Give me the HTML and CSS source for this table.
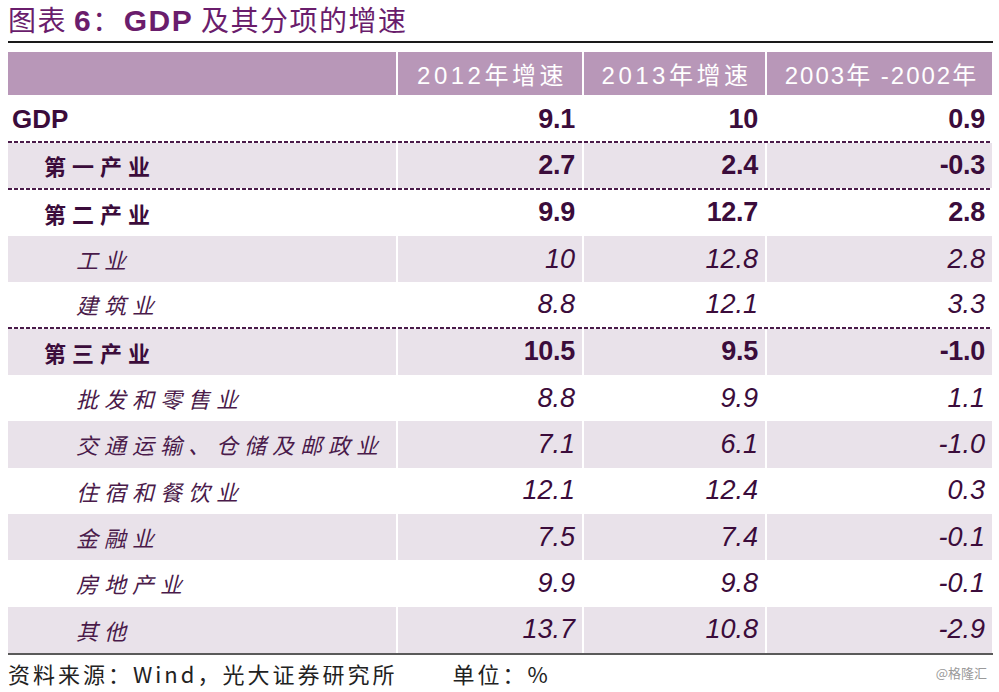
FILE: index.html
```html
<!DOCTYPE html>
<html lang="zh">
<head>
<meta charset="utf-8">
<title>图表6：GDP及其分项的增速</title>
<link rel="stylesheet" href="styles.css">
</head>
<body>
<div class="page">
  <h1 class="title">图表<span class="lat six">6</span>：<span class="lat">GDP</span> 及其分项的增速</h1>
  <div class="rule"></div>
  <div class="table">
    <div class="row head">
      <div class="cell"></div>
      <div class="cell hc">2012年增速</div>
      <div class="cell hc">2013年增速</div>
      <div class="cell hc">2003年 -2002年</div>
    </div>
    <div class="row white bold dash-b">
      <div class="cell lab gdp">GDP</div>
      <div class="cell num">9.1</div>
      <div class="cell num">10</div>
      <div class="cell num">0.9</div>
    </div>
    <div class="row shade bold dash-b">
      <div class="cell lab l1">第一产业</div>
      <div class="cell num">2.7</div>
      <div class="cell num">2.4</div>
      <div class="cell num">-0.3</div>
    </div>
    <div class="row white bold">
      <div class="cell lab l1">第二产业</div>
      <div class="cell num">9.9</div>
      <div class="cell num">12.7</div>
      <div class="cell num">2.8</div>
    </div>
    <div class="row shade it">
      <div class="cell lab l2">工业</div>
      <div class="cell num">10</div>
      <div class="cell num">12.8</div>
      <div class="cell num">2.8</div>
    </div>
    <div class="row white it dash-b">
      <div class="cell lab l2">建筑业</div>
      <div class="cell num">8.8</div>
      <div class="cell num">12.1</div>
      <div class="cell num">3.3</div>
    </div>
    <div class="row shade bold">
      <div class="cell lab l1">第三产业</div>
      <div class="cell num">10.5</div>
      <div class="cell num">9.5</div>
      <div class="cell num">-1.0</div>
    </div>
    <div class="row white it">
      <div class="cell lab l2">批发和零售业</div>
      <div class="cell num">8.8</div>
      <div class="cell num">9.9</div>
      <div class="cell num">1.1</div>
    </div>
    <div class="row shade it">
      <div class="cell lab l2">交通运输、仓储及邮政业</div>
      <div class="cell num">7.1</div>
      <div class="cell num">6.1</div>
      <div class="cell num">-1.0</div>
    </div>
    <div class="row white it">
      <div class="cell lab l2">住宿和餐饮业</div>
      <div class="cell num">12.1</div>
      <div class="cell num">12.4</div>
      <div class="cell num">0.3</div>
    </div>
    <div class="row shade it">
      <div class="cell lab l2">金融业</div>
      <div class="cell num">7.5</div>
      <div class="cell num">7.4</div>
      <div class="cell num">-0.1</div>
    </div>
    <div class="row white it">
      <div class="cell lab l2">房地产业</div>
      <div class="cell num">9.9</div>
      <div class="cell num">9.8</div>
      <div class="cell num">-0.1</div>
    </div>
    <div class="row shade it">
      <div class="cell lab l2">其他</div>
      <div class="cell num">13.7</div>
      <div class="cell num">10.8</div>
      <div class="cell num">-2.9</div>
    </div>
  </div>
  <div class="rule2"></div>
  <div class="foot">
    <span class="src">资料来源：Wind，光大证券研究所</span>
    <span class="unit">单位：%</span>
    <span class="wm">@格隆汇</span>
  </div>
</div>
</body>
</html>
```

FILE: styles.css
```css
html, body {
  margin: 0;
  padding: 0;
  background: #fff;
}
.page {
  width: 999px;
  height: 692px;
  box-sizing: border-box;
  padding: 0 6px 0 8px;
  font-family: "Liberation Sans", "Noto Sans CJK SC", sans-serif;
  overflow: hidden;
}
.title {
  margin: 0;
  height: 40px;
  line-height: 38px;
  font-size: 28px;
  font-weight: normal;
  color: #6a1d6c;
  letter-spacing: 1.5px;
  font-family: "Noto Sans CJK SC", sans-serif;
}
.title .lat {
  font-family: "Liberation Sans", sans-serif;
  font-weight: bold;
  font-size: 30px;
  margin-left: 2px;
}
.title .six {
  margin-left: 7px;
}
.rule {
  height: 2px;
  background: #1a1a1a;
  margin-top: 1px;
}
.table {
  margin-top: 9px;
  width: 984px;
  display: flex;
  flex-direction: column;
}
.row {
  display: grid;
  grid-template-columns: 388px 184px 181px 225px;
  column-gap: 2px;
  height: 46.33px;
  box-sizing: border-box;
}
.row.head {
  height: 45px;
  padding-bottom: 2px;
}
.cell {
  display: flex;
  align-items: center;
  box-sizing: border-box;
  color: #3b0c3b;
}
.head .cell {
  background: #b897b8;
}
.hc {
  justify-content: center;
  color: #fff;
  font-size: 24px;
  letter-spacing: 3.5px;
  padding-left: 4px;
  white-space: pre;
}
.head .hc:last-child {
  letter-spacing: 2px;
}
.shade .cell {
  background: #e9e2ea;
}
.white .cell {
  background: #fff;
}
.dash-b {
  padding-bottom: 2px;
  background: repeating-linear-gradient(90deg, #4a1b4a 0 4px, transparent 4px 6px) left bottom / 100% 2px no-repeat;
}
.num {
  justify-content: flex-end;
  padding-right: 7px;
  font-size: 27px;
  font-family: "Liberation Sans", sans-serif;
}
.bold .num {
  font-weight: bold;
  letter-spacing: -0.3px;
}
.it .num {
  font-style: italic;
}
.lab {
  font-family: "Noto Sans CJK SC", sans-serif;
  font-size: 22px;
  letter-spacing: 6px;
}
.bold .lab {
  font-weight: bold;
}
.it .lab {
  font-style: italic;
  font-weight: normal;
  color: #4a1a4a;
}
.gdp {
  font-family: "Liberation Sans", sans-serif;
  font-size: 26px;
  letter-spacing: 0;
  padding-left: 4px;
}
.l1 {
  padding-left: 36px;
}
.l2 {
  padding-left: 68px;
}
.rule2 {
  height: 2px;
  background: #5a5a5a;
  width: 985px;
}
.foot {
  display: flex;
  align-items: center;
  height: 36px;
  font-family: "Noto Sans CJK SC", sans-serif;
  color: #222;
}
.src, .unit {
  font-size: 22px;
  letter-spacing: 3px;
}
.unit {
  margin-left: 55px;
}
.wm {
  margin-left: auto;
  margin-right: 6px;
  font-size: 13px;
  color: #9a9a9a;
}
```
